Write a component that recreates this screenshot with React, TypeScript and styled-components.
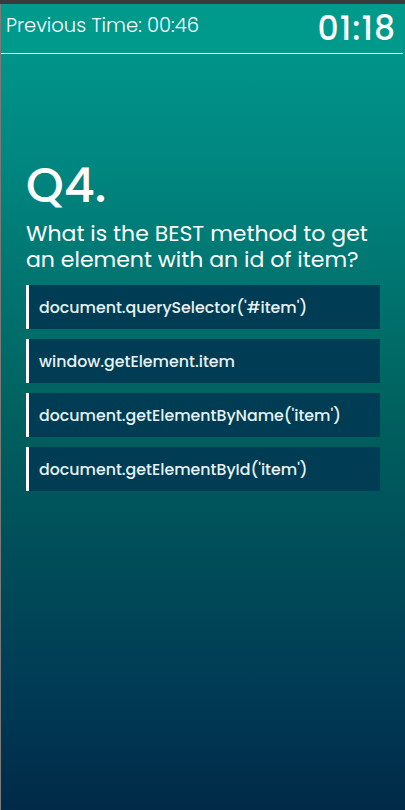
import React from "react";
import styled, { createGlobalStyle } from "styled-components";

const GlobalStyle = createGlobalStyle`
  html, body {
    margin: 0;
    padding: 0;
    background: #3a3a3a;
  }
  body {
    font-family: "Poppins", "Open Sans", "Noto Sans", sans-serif;
  }
`;

const Frame = styled.div`
  min-height: 806px;
  margin-top: 4px;
  border-left: 1px solid #7a7a7a;
  background: linear-gradient(180deg, #009a8e 0%, #008680 20%, #00625f 50%, #003b55 85%, #002a48 100%);
  color: #ffffff;
  display: flex;
  flex-direction: column;
`;

const Header = styled.header`
  display: flex;
  align-items: center;
  justify-content: space-between;
  height: 49px;
  padding: 0 7px 0 5px;
  border-bottom: 1px solid #ffffff;
  background: #009a8d;
  margin-right: 2px;
`;

const PrevTime = styled.span`
  font-size: 19.5px;
  font-weight: 300;
  margin-top: -7px;
`;

const Clock = styled.span`
  font-size: 33px;
  font-weight: 500;
  letter-spacing: 1px;
`;

const Content = styled.main`
  display: flex;
  flex-direction: column;
  padding: 103px 25px 0 25px;
`;

const QuestionNumber = styled.h1`
  margin: 0;
  font-size: 48px;
  font-weight: 500;
  line-height: 58px;
`;

const QuestionText = styled.p`
  margin: 6px 0 13px;
  font-size: 22px;
  line-height: 25.5px;
  font-weight: 400;
`;

const Options = styled.ul`
  list-style: none;
  margin: 0;
  padding: 0;
  display: flex;
  flex-direction: column;
  gap: 10px;
`;

const Option = styled.li`
  height: 44px;
  display: flex;
  align-items: center;
  padding-left: 10px;
  background: #003d55;
  border-left: 3px solid #ffffff;
  font-size: 15.8px;
  font-weight: 500;
  color: #e8f2f2;
`;

const options = [
  "document.querySelector('#item')",
  "window.getElement.item",
  "document.getElementByName('item')",
  "document.getElementById('item')",
];

export default function App() {
  return (
    <>
      <GlobalStyle />
      <Frame>
        <Header>
          <PrevTime>Previous Time: 00:46</PrevTime>
          <Clock>01:18</Clock>
        </Header>
        <Content>
          <QuestionNumber>Q4.</QuestionNumber>
          <QuestionText>
            What is the BEST method to get an element with an id of item?
          </QuestionText>
          <Options>
            {options.map((o) => (
              <Option key={o}>{o}</Option>
            ))}
          </Options>
        </Content>
      </Frame>
    </>
  );
}
